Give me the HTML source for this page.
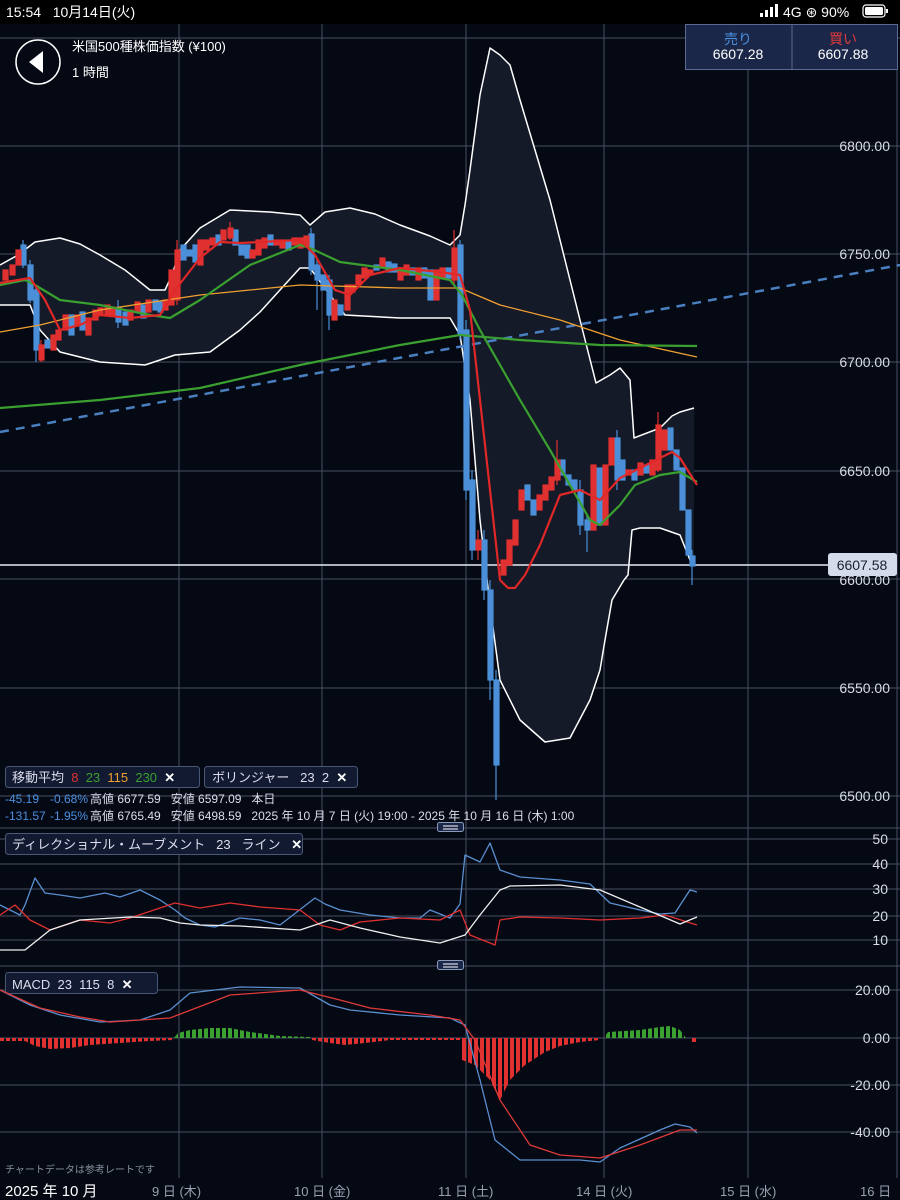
<!DOCTYPE html>
<html><head><meta charset="utf-8"><style>
html,body{margin:0;padding:0;background:#040913;}
body{width:900px;height:1200px;overflow:hidden;position:relative;font-family:"Liberation Sans","Noto Sans CJK JP",sans-serif;}
svg{position:absolute;left:0;top:0}
text{white-space:pre}
</style></head><body>
<svg width="900" height="1200" viewBox="0 0 900 1200" xmlns="http://www.w3.org/2000/svg" font-family="Liberation Sans, Noto Sans CJK JP, sans-serif">
<defs>
<pattern id="pr" width="6" height="10" patternUnits="userSpaceOnUse"><rect x="0" y="0" width="4" height="10" fill="#e03030"/></pattern>
<pattern id="pg" width="6" height="10" patternUnits="userSpaceOnUse"><rect x="0" y="0" width="4" height="10" fill="#3aa030"/></pattern>
</defs>
<rect x="0" y="0" width="900" height="1200" fill="#040913"/>
<rect x="0" y="0" width="900" height="24" fill="#000"/>
<text x="6" y="17" fill="#fff" font-size="14">15:54   10月14日(火)</text>
<g fill="#fff"><rect x="760" y="13" width="3" height="4"/><rect x="765" y="10" width="3" height="7"/><rect x="770" y="7" width="3" height="10"/><rect x="775" y="4" width="3" height="13"/></g>
<text x="783" y="17" fill="#fff" font-size="14">4G ⊛ 90%</text>
<rect x="863" y="5" width="22" height="12" rx="3" fill="none" stroke="#fff" stroke-width="1.2"/><rect x="865" y="7" width="18" height="8" rx="1.5" fill="#fff"/><rect x="886" y="9" width="2" height="4" fill="#fff"/>

<g stroke="#4a5060" stroke-width="1">
<line x1="0" y1="38" x2="900" y2="38"/>
<line x1="0" y1="146" x2="900" y2="146"/><line x1="0" y1="254" x2="900" y2="254"/><line x1="0" y1="362" x2="900" y2="362"/><line x1="0" y1="471" x2="900" y2="471"/><line x1="0" y1="579" x2="900" y2="579"/><line x1="0" y1="688" x2="900" y2="688"/><line x1="0" y1="796" x2="900" y2="796"/>
<line x1="0" y1="828" x2="900" y2="828"/>
<line x1="0" y1="839" x2="900" y2="839"/><line x1="0" y1="864" x2="900" y2="864"/><line x1="0" y1="889" x2="900" y2="889"/><line x1="0" y1="916" x2="900" y2="916"/><line x1="0" y1="940" x2="900" y2="940"/>
<line x1="0" y1="966" x2="900" y2="966"/>
<line x1="0" y1="990" x2="900" y2="990"/><line x1="0" y1="1038" x2="900" y2="1038"/><line x1="0" y1="1085" x2="900" y2="1085"/><line x1="0" y1="1132" x2="900" y2="1132"/>
<line x1="179" y1="24" x2="179" y2="1178"/><line x1="322" y1="24" x2="322" y2="1178"/><line x1="466" y1="24" x2="466" y2="1178"/><line x1="604" y1="24" x2="604" y2="1178"/><line x1="748" y1="24" x2="748" y2="1178"/><line x1="897" y1="24" x2="897" y2="1178"/>
</g>

<path d="M0,265 L18,255 L35,242 L60,238 L80,244 L100,255 L125,270 L150,290 L165,290 L172,275 L180,250 L200,228 L230,210 L270,212 L300,215 L310,225 L325,212 L350,208 L375,214 L400,225 L430,236 L450,245 L460,235 L465,205 L470,170 L480,95 L490,48 L500,55 L510,65 L520,100 L535,150 L550,200 L565,260 L580,320 L596,383 L610,375 L620,368 L630,380 L634,438 L660,428 L672,416 L680,412 L694,408 L694,560 L690,560 L680,535 L660,528 L640,528 L632,530 L628,575 L624,580 L612,600 L605,640 L600,670 L590,700 L570,738 L545,742 L520,720 L500,680 L490,605 L480,520 L470,400 L460,335 L450,318 L400,318 L345,315 L330,295 L310,268 L300,268 L280,290 L260,312 L240,330 L210,352 L175,355 L145,365 L100,362 L60,352 L40,330 L30,305 L0,305 Z" fill="#141a27"/>
<g fill="none" stroke="#fff" stroke-width="1.5" stroke-linejoin="round">
<path d="M0,265 L18,255 L35,242 L60,238 L80,244 L100,255 L125,270 L150,290 L165,290 L172,275 L180,250 L200,228 L230,210 L270,212 L300,215 L310,225 L325,212 L350,208 L375,214 L400,225 L430,236 L450,245 L460,235 L465,205 L470,170 L480,95 L490,48 L500,55 L510,65 L520,100 L535,150 L550,200 L565,260 L580,320 L596,383 L610,375 L620,368 L630,380 L634,438 L660,428 L672,416 L680,412 L694,408"/>
<path d="M0,305 L30,305 L40,330 L60,352 L100,362 L145,365 L175,355 L210,352 L240,330 L260,312 L280,290 L300,268 L310,268 L330,295 L345,315 L400,318 L450,318 L460,335 L470,400 L480,520 L490,605 L500,680 L520,720 L545,742 L570,738 L590,700 L600,670 L605,640 L612,600 L624,580 L628,575 L632,530 L640,528 L660,528 L680,535 L690,560"/>
</g>
<line x1="0" y1="432" x2="900" y2="265" stroke="#4a7fc0" stroke-width="2.5" stroke-dasharray="9,7"/>
<line x1="0" y1="565" x2="830" y2="565" stroke="#e8ecf4" stroke-width="1.5"/>

<g stroke="#4a8fd8" stroke-width="1.2" fill="#4a8fd8">
<line x1="23" y1="240" x2="23" y2="268"/><rect x="21" y="245" width="5" height="20"/>
<line x1="30" y1="260" x2="30" y2="303"/><rect x="28" y="265" width="5" height="35"/>
<line x1="36" y1="285" x2="36" y2="362"/><rect x="34" y="290" width="5" height="60"/>
<rect x="45" y="340" width="5" height="8"/><rect x="69" y="315" width="5" height="20"/><rect x="80" y="312" width="5" height="18"/>
<line x1="118" y1="300" x2="118" y2="328"/><rect x="116" y="308" width="5" height="14"/>
<rect x="123" y="312" width="5" height="13"/><rect x="141" y="305" width="5" height="13"/><rect x="153" y="300" width="5" height="10"/><rect x="158" y="302" width="5" height="10"/>
<rect x="181" y="245" width="5" height="15"/><rect x="187" y="250" width="5" height="6"/><rect x="193" y="245" width="5" height="17"/>
<rect x="216" y="235" width="5" height="10"/><rect x="233" y="230" width="5" height="15"/><rect x="239" y="245" width="5" height="10"/><rect x="245" y="245" width="5" height="13"/>
<rect x="268" y="235" width="5" height="10"/><rect x="286" y="240" width="5" height="10"/>
<line x1="311" y1="228" x2="311" y2="275"/><rect x="309" y="234" width="5" height="36"/>
<line x1="317" y1="260" x2="317" y2="310"/><rect x="315" y="265" width="5" height="15"/>
<rect x="321" y="275" width="5" height="15"/>
<line x1="329" y1="275" x2="329" y2="330"/><rect x="327" y="280" width="5" height="35"/>
<rect x="338" y="305" width="5" height="10"/><rect x="374" y="265" width="5" height="5"/><rect x="386" y="262" width="5" height="10"/><rect x="392" y="264" width="5" height="8"/><rect x="410" y="268" width="5" height="7"/><rect x="422" y="268" width="5" height="10"/><rect x="428" y="270" width="5" height="30"/><rect x="446" y="268" width="5" height="10"/>
<line x1="460" y1="240" x2="460" y2="340"/><rect x="458" y="245" width="5" height="90"/>
<line x1="466" y1="320" x2="466" y2="500"/><rect x="464" y="330" width="5" height="160"/>
<line x1="472" y1="470" x2="472" y2="560"/><rect x="470" y="480" width="5" height="70"/>
<line x1="484" y1="530" x2="484" y2="600"/><rect x="482" y="540" width="5" height="50"/>
<line x1="490" y1="580" x2="490" y2="700"/><rect x="488" y="590" width="5" height="90"/>
<line x1="496" y1="670" x2="496" y2="800"/><rect x="494" y="680" width="5" height="85"/>
<rect x="525" y="485" width="5" height="15"/><rect x="531" y="500" width="5" height="15"/>
<rect x="560" y="460" width="5" height="15"/><rect x="566" y="475" width="5" height="10"/><rect x="572" y="480" width="5" height="10"/>
<line x1="580" y1="480" x2="580" y2="535"/><rect x="578" y="490" width="5" height="35"/><line x1="587" y1="515" x2="587" y2="552"/><rect x="585" y="520" width="5" height="10"/>
<rect x="597" y="468" width="5" height="57"/><line x1="617" y1="430" x2="617" y2="490"/><rect x="615" y="438" width="5" height="42"/><rect x="620" y="460" width="5" height="20"/><rect x="632" y="470" width="5" height="10"/><rect x="644" y="465" width="5" height="8"/>
<rect x="668" y="428" width="5" height="22"/><rect x="674" y="450" width="5" height="20"/><rect x="680" y="468" width="5" height="42"/><rect x="686" y="510" width="5" height="45"/>
<line x1="692" y1="550" x2="692" y2="585"/><rect x="690" y="556" width="5" height="10"/>
</g>
<g stroke="#e03030" stroke-width="1.2" fill="#e03030">
<rect x="3" y="270" width="5" height="10"/><rect x="10" y="265" width="5" height="10"/><rect x="16" y="250" width="5" height="15"/>
<line x1="41" y1="340" x2="41" y2="362"/><rect x="39" y="345" width="5" height="15"/><rect x="51" y="335" width="5" height="15"/><rect x="56" y="330" width="5" height="10"/><rect x="63" y="315" width="5" height="15"/><rect x="75" y="315" width="5" height="10"/><rect x="86" y="318" width="5" height="17"/><rect x="93" y="310" width="5" height="10"/><rect x="98" y="308" width="5" height="7"/><rect x="105" y="305" width="5" height="10"/><rect x="110" y="307" width="5" height="8"/><rect x="128" y="310" width="5" height="10"/><rect x="135" y="302" width="5" height="10"/><rect x="146" y="300" width="5" height="12"/><rect x="163" y="300" width="5" height="10"/>
<rect x="169" y="270" width="5" height="35"/><line x1="177" y1="240" x2="177" y2="305"/><rect x="175" y="250" width="5" height="50"/>
<rect x="198" y="240" width="5" height="25"/><rect x="204" y="240" width="5" height="10"/><rect x="210" y="238" width="5" height="7"/><rect x="221" y="230" width="5" height="10"/><line x1="230" y1="222" x2="230" y2="240"/><rect x="228" y="228" width="5" height="10"/><rect x="250" y="250" width="5" height="8"/><rect x="256" y="240" width="5" height="15"/><rect x="262" y="238" width="5" height="10"/><rect x="274" y="240" width="5" height="5"/><rect x="280" y="240" width="5" height="8"/><rect x="292" y="238" width="5" height="7"/><rect x="298" y="238" width="5" height="10"/><rect x="304" y="236" width="5" height="11"/>
<rect x="332" y="300" width="5" height="20"/><rect x="345" y="285" width="5" height="25"/><rect x="350" y="285" width="5" height="7"/><rect x="356" y="275" width="5" height="10"/><rect x="362" y="268" width="5" height="10"/><rect x="368" y="270" width="5" height="5"/><rect x="380" y="258" width="5" height="10"/><rect x="398" y="268" width="5" height="12"/><rect x="404" y="265" width="5" height="10"/><rect x="416" y="268" width="5" height="12"/><rect x="434" y="270" width="5" height="30"/><rect x="440" y="268" width="5" height="10"/>
<line x1="454" y1="230" x2="454" y2="285"/><rect x="452" y="248" width="5" height="32"/>
<line x1="478" y1="530" x2="478" y2="560"/><rect x="476" y="540" width="5" height="10"/>
<rect x="501" y="560" width="5" height="15"/><rect x="507" y="540" width="5" height="25"/><rect x="513" y="520" width="5" height="25"/><rect x="519" y="490" width="5" height="20"/><rect x="537" y="495" width="5" height="15"/><rect x="543" y="485" width="5" height="15"/><rect x="549" y="477" width="5" height="13"/><line x1="557" y1="440" x2="557" y2="485"/><rect x="555" y="460" width="5" height="20"/>
<rect x="591" y="465" width="5" height="65"/><rect x="603" y="465" width="5" height="60"/><rect x="609" y="438" width="5" height="27"/><rect x="626" y="470" width="5" height="5"/><rect x="638" y="463" width="5" height="12"/><rect x="650" y="460" width="5" height="15"/><line x1="658" y1="412" x2="658" y2="472"/><rect x="656" y="425" width="5" height="45"/><rect x="662" y="430" width="5" height="20"/>
</g>

<g fill="none" stroke-width="2.2" stroke-linejoin="round">
<path stroke="#f0a030" stroke-width="1.3" d="M0,332 L40,325 L100,310 L200,295 L300,285 L400,288 L460,288 L500,305 L560,320 L620,340 L697,357"/>
<path stroke="#3aa030" d="M0,408 L100,400 L200,388 L300,365 L400,345 L460,335 L520,340 L600,345 L697,346"/>
<path stroke="#3aa030" d="M0,285 L25,280 L35,285 L60,300 L100,305 L150,315 L170,318 L200,300 L250,265 L300,245 L310,248 L340,262 L400,270 L450,280 L462,295 L480,330 L520,400 L550,450 L590,520 L600,525 L620,505 L635,485 L660,475 L680,472 L697,482"/>
<path stroke="#e02828" d="M0,283 L30,278 L45,300 L60,330 L80,325 L100,315 L130,318 L160,315 L175,290 L200,258 L220,242 L240,243 L260,242 L300,240 L315,255 L335,290 L350,295 L370,275 L400,268 L440,272 L460,275 L470,310 L480,400 L490,490 L500,580 L508,588 L515,588 L525,575 L540,545 L560,495 L580,490 L600,500 L620,478 L640,468 L660,458 L672,452 L680,458 L697,485"/>
</g>

<circle cx="38" cy="62" r="22" fill="none" stroke="#fff" stroke-width="1.5"/>
<path d="M29,62 L43,51 L43,73 Z" fill="#fff"/>
<text x="72" y="51" fill="#fff" font-size="13">米国500種株価指数 (¥100)</text>
<text x="72" y="77" fill="#fff" font-size="13">1 時間</text>
<rect x="685.5" y="24.5" width="212" height="45" fill="#1b2748" stroke="#5a6a92"/>
<line x1="792" y1="24" x2="792" y2="70" stroke="#5a6a92"/>
<text x="738" y="44" fill="#4a90e0" font-size="14" text-anchor="middle">売り</text>
<text x="738" y="59" fill="#fff" font-size="14" text-anchor="middle">6607.28</text>
<text x="843" y="44" fill="#e03a3a" font-size="14" text-anchor="middle">買い</text>
<text x="843" y="59" fill="#fff" font-size="14" text-anchor="middle">6607.88</text>

<g fill="#d8dce4" font-size="14" text-anchor="end">
<text x="890" y="151">6800.00</text><text x="890" y="259">6750.00</text><text x="890" y="367">6700.00</text><text x="890" y="476">6650.00</text><text x="890" y="585">6600.00</text><text x="890" y="693">6550.00</text><text x="890" y="801">6500.00</text>
<text x="888" y="844">50</text><text x="888" y="869">40</text><text x="888" y="894">30</text><text x="888" y="921">20</text><text x="888" y="945">10</text>
<text x="890" y="995">20.00</text><text x="890" y="1043">0.00</text><text x="890" y="1090">-20.00</text><text x="890" y="1137">-40.00</text>
</g>
<rect x="828" y="553" width="69" height="23" rx="3" fill="#d4dcec"/>
<text x="862" y="570" fill="#1a2030" font-size="14" text-anchor="middle">6607.58</text>

<rect x="5.5" y="766.5" width="194" height="21" rx="3" fill="#111a30" stroke="#4a5878"/>
<text x="12" y="782" font-size="13" fill="#dde"><tspan>移動平均  </tspan><tspan fill="#e03030">8  </tspan><tspan fill="#3aa030">23  </tspan><tspan fill="#f0a030">115  </tspan><tspan fill="#3aa030">230  </tspan><tspan fill="#fff" font-weight="bold">✕</tspan></text>
<rect x="204.5" y="766.5" width="153" height="21" rx="3" fill="#111a30" stroke="#4a5878"/>
<text x="212" y="782" font-size="13" fill="#dde">ボリンジャー   23  2  <tspan fill="#fff" font-weight="bold">✕</tspan></text>
<g font-size="12">
<text x="5" y="803" fill="#4a90e0">-45.19</text><text x="50" y="803" fill="#4a90e0">-0.68%</text><text x="90" y="803" fill="#dde">高値 6677.59   安値 6597.09   本日</text>
<text x="5" y="820" fill="#4a90e0">-131.57</text><text x="50" y="820" fill="#4a90e0">-1.95%</text><text x="90" y="820" fill="#dde">高値 6765.49   安値 6498.59   2025 年 10 月 7 日 (火) 19:00 - 2025 年 10 月 16 日 (木) 1:00</text>
</g>
<rect x="437.5" y="822.5" width="26" height="9" rx="2" fill="#1b2748" stroke="#8a9ab8"/><line x1="443" y1="826" x2="458" y2="826" stroke="#fff"/><line x1="443" y1="829" x2="458" y2="829" stroke="#fff"/>
<rect x="437.5" y="960.5" width="26" height="9" rx="2" fill="#1b2748" stroke="#8a9ab8"/><line x1="443" y1="964" x2="458" y2="964" stroke="#fff"/><line x1="443" y1="967" x2="458" y2="967" stroke="#fff"/>
<rect x="5.5" y="833.5" width="297" height="21" rx="3" fill="#111a30" stroke="#4a5878"/>
<text x="12" y="849" font-size="13" fill="#dde">ディレクショナル・ムーブメント   23   ライン   <tspan fill="#fff" font-weight="bold">✕</tspan></text>
<rect x="5.5" y="972.5" width="152" height="21" rx="3" fill="#111a30" stroke="#4a5878"/>
<text x="12" y="989" font-size="13" fill="#dde">MACD  23  115  8  <tspan fill="#fff" font-weight="bold">✕</tspan></text>

<g fill="none" stroke-width="1.3" stroke-linejoin="round">
<path stroke="#5a8fd0" d="M0,905 L20,915 L25,905 L35,878 L45,893 L60,895 L80,898 L105,893 L120,897 L140,890 L160,900 L175,910 L185,918 L200,925 L215,927 L240,918 L260,920 L280,925 L315,898 L325,904 L340,910 L370,915 L400,918 L420,918 L430,910 L450,918 L460,904 L465,855 L480,862 L490,843 L500,870 L520,877 L560,880 L590,884 L610,903 L640,910 L660,914 L675,913 L690,890 L697,892"/>
<path stroke="#e03030" d="M0,915 L15,905 L30,920 L50,930 L80,920 L110,923 L130,918 L175,903 L200,908 L230,903 L260,907 L300,910 L320,925 L340,930 L360,922 L400,918 L440,920 L460,910 L470,935 L495,945 L500,920 L520,917 L560,918 L600,920 L640,918 L665,915 L697,925"/>
<path stroke="#f0f0f0" d="M0,950 L25,950 L50,930 L80,920 L130,917 L160,918 L180,923 L200,925 L240,926 L300,930 L330,920 L360,928 L400,937 L440,943 L465,935 L480,915 L500,890 L510,886 L560,885 L600,890 L640,907 L680,924 L697,917"/>
</g>

<g fill="url(#pr)">
<path d="M0,1038 L0,1041 L25,1041 L35,1046 L50,1049 L70,1048 L90,1045 L120,1043 L150,1041 L172,1040 L172,1038 Z"/>
<path d="M312,1038 L312,1040 L330,1043 L345,1045 L365,1043 L390,1040 L420,1040 L460,1040 L460,1038 Z"/>
<path d="M462,1038 L462,1060 L475,1065 L490,1080 L500,1100 L510,1080 L525,1065 L545,1052 L560,1046 L580,1042 L600,1040 L600,1038 Z"/>
<rect x="692" y="1038" width="4" height="4" fill="#e03030"/>
</g>
<g fill="url(#pg)">
<path d="M174,1038 L178,1033 L190,1030 L210,1028 L230,1028 L250,1032 L280,1036 L310,1037 L310,1038 Z"/>
<path d="M604,1038 L608,1032 L640,1030 L660,1027 L670,1026 L680,1030 L686,1038 Z"/>
</g>
<g fill="none" stroke-width="1.3" stroke-linejoin="round">
<path stroke="#5a8fd0" d="M0,990 L30,1005 L60,1015 L100,1022 L140,1020 L170,1010 L190,993 L240,987 L300,988 L330,1005 L350,1010 L400,1015 L450,1018 L465,1025 L480,1080 L495,1140 L520,1160 L540,1160 L580,1160 L600,1162 L620,1148 L660,1130 L675,1124 L690,1127 L697,1133"/>
<path stroke="#e03a3a" d="M0,990 L40,1008 L80,1017 L110,1022 L170,1018 L230,995 L300,990 L340,1000 L370,1008 L430,1015 L460,1020 L475,1040 L500,1100 L530,1145 L560,1155 L600,1158 L640,1145 L680,1130 L697,1130"/>
</g>

<text x="5" y="1173" fill="#8a90a0" font-size="10">チャートデータは参考レートです</text>
<text x="5" y="1196" fill="#fff" font-size="15">2025 年 10 月</text>
<g fill="#9aa0b0" font-size="13">
<text x="152" y="1196">9 日 (木)</text><text x="294" y="1196">10 日 (金)</text><text x="438" y="1196">11 日 (土)</text><text x="576" y="1196">14 日 (火)</text><text x="720" y="1196">15 日 (水)</text><text x="860" y="1196">16 日</text>
</g>
</svg>
</body></html>
